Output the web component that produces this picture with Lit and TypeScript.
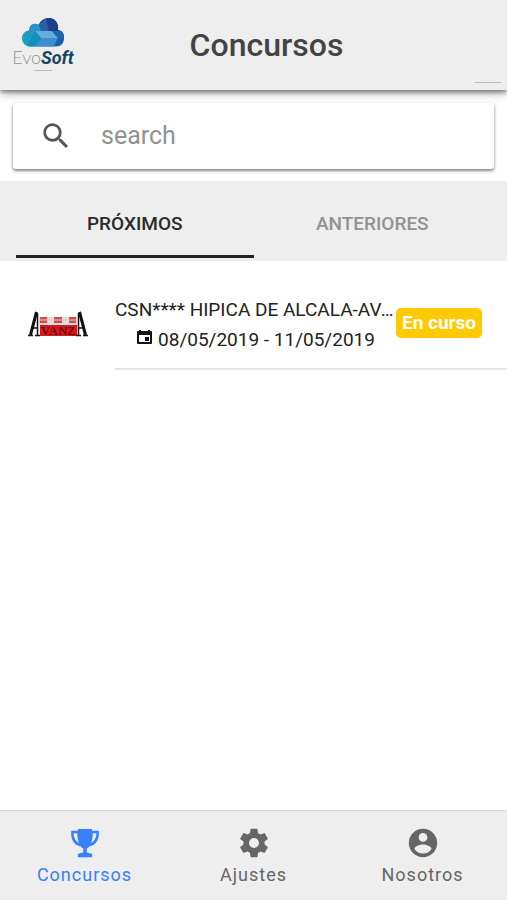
import { LitElement, html, css, svg } from "lit";
import { customElement, state } from "lit/decorators.js";
import { classMap } from "lit/directives/class-map.js";

const icons = {
  trophy: svg`<path fill-rule="evenodd" d="M150 44h212v28h102v44c0 90-42 170-138 190-14 18-28 26-44 32v60c20 6 62 14 82 22v52H148v-52c20-8 62-16 82-22v-60c-16-6-30-14-44-32C90 286 48 206 48 116V72h102zM84 108c2 68 28 118 80 148-18-46-24-90-24-148zm288 0c0 58-6 102-24 148 52-30 78-80 80-148z"/>`,
  gear: svg`<path transform="scale(21.333)" d="M19.43 12.98c.04-.32.07-.64.07-.98s-.03-.66-.07-.98l2.11-1.65c.19-.15.24-.42.12-.64l-2-3.46c-.12-.22-.39-.3-.61-.22l-2.49 1c-.52-.4-1.08-.73-1.69-.98l-.38-2.65C14.46 2.18 14.25 2 14 2h-4c-.25 0-.46.18-.49.42l-.38 2.65c-.61.25-1.17.59-1.69.98l-2.49-1c-.23-.09-.49 0-.61.22l-2 3.46c-.13.22-.07.49.12.64l2.11 1.65c-.04.32-.07.65-.07.98s.03.66.07.98l-2.11 1.65c-.19.15-.24.42-.12.64l2 3.46c.12.22.39.3.61.22l2.49-1c.52.4 1.08.73 1.69.98l.38 2.65c.03.24.24.42.49.42h4c.25 0 .46-.18.49-.42l.38-2.65c.61-.25 1.17-.59 1.69-.98l2.49 1c.23.09.49 0 .61-.22l2-3.46c.12-.22.07-.49-.12-.64l-2.11-1.65zM12 15.500c-1.930 0-3.500-1.570-3.500-3.500s1.570-3.500 3.500-3.500 3.500 1.570 3.500 3.500-1.570 3.500-3.500 3.500z"/>`,
  person: svg`<path transform="scale(21.333)" fill-rule="evenodd" d="M12 2a10 10 0 1 0 0 20 10 10 0 0 0 0-20zm0 3a3.100 3.100 0 1 1 0 6.200A3.100 3.100 0 0 1 12 5zm0 14.400a7.200 7.200 0 0 1-6-3.200c.03-2 4-3.100 6-3.100s5.970 1.100 6 3.100a7.200 7.200 0 0 1-6 3.200z"/>`,
};

@customElement("app-root")
export class AppRoot extends LitElement {
  @state() private segment = "PRÓXIMOS";
  @state() private tab = "Concursos";

  static styles = css`
    :host {
      display: flex;
      flex-direction: column;
      min-height: 100vh;
      background: #fff;
      color: #222;
      font-family: Roboto, sans-serif;
    }
    * { box-sizing: border-box; }
    button {
      border: 0;
      padding: 0;
      background: none;
      font: inherit;
      color: inherit;
      cursor: pointer;
    }
    header {
      display: grid;
      grid-template-columns: 86px 1fr 60px;
      height: 90px;
      background: #eee;
      box-shadow: 0 2px 10px rgba(0, 0, 0, 0.4), 0 2px 4px rgba(0, 0, 0, 0.35);
    }
    .logo {
      display: flex;
      flex-direction: column;
      align-items: center;
      padding-top: 17px;
    }
    .cloud { width: 44px; height: 30px; }
    .brand {
      font: 300 18px/20px Lato, sans-serif;
      color: #8d979c;
      white-space: nowrap;
    }
    .brand b {
      font: italic 700 18px/20px Roboto, sans-serif;
      color: #124865;
    }
    .tagline { width: 18px; height: 1px; margin-top: 2px; background: #bbb; }
    h1 {
      margin: 0;
      font-size: 32px;
      line-height: 90px;
      font-weight: 500;
      text-align: center;
      color: #444;
    }
    .end {
      align-self: end;
      justify-self: end;
      width: 26px;
      height: 1px;
      margin: 0 6px 7px 0;
      background: #bbb;
    }
    .search {
      display: flex;
      align-items: center;
      height: 66px;
      margin: 13px 13px 12px;
      padding-left: 26px;
      gap: 28px;
      background: #fff;
      border-radius: 3px;
      box-shadow: 0 2px 3px rgba(0, 0, 0, 0.4), 0 1px 4px rgba(0, 0, 0, 0.15);
      z-index: 1;
    }
    .search svg { width: 34px; height: 34px; flex: none; fill: #555; }
    input {
      flex: 1;
      min-width: 0;
      height: 60px;
      border: 0;
      padding: 0 0 2px;
      outline: 0;
      background: none;
      font: 25px Roboto, sans-serif;
      color: #333;
    }
    input::placeholder { color: #929292; opacity: 1; }
    .segments {
      display: grid;
      grid-template-columns: 1fr 1fr;
      height: 80px;
      padding: 0 16px 3px;
      background: #eee;
    }
    .segments button {
      padding-top: 10px;
      border-bottom: 3px solid transparent;
      font-size: 19px;
      font-weight: 500;
      color: #929292;
    }
    .segments .on { color: #2a2a2a; border-color: #222; }
    ul { flex: 1; margin: 0; padding: 0; list-style: none; }
    li { display: flex; align-items: center; padding-left: 28px; }
    .avatar { width: 60px; height: 32px; flex: none; margin-top: 20px; }
    .avatar text { font: 400 13px "Liberation Serif", serif; fill: #3c0406; }
    .body {
      flex: 1;
      min-width: 0;
      display: flex;
      align-items: center;
      height: 109px;
      margin-left: 27px;
      padding: 20px 25px 0 0;
      border-bottom: 2px solid #e4e4e4;
    }
    .info {
      flex: 1;
      min-width: 0;
      text-align: center;
      font-size: 19px;
      line-height: 30px;
    }
    .name {
      margin: 0;
      font: inherit;
      text-align: left;
      white-space: nowrap;
      overflow: hidden;
      text-overflow: ellipsis;
    }
    .date { display: flex; justify-content: center; gap: 5px; margin: 0; }
    .date svg { width: 17px; height: 17px; margin-top: 4px; fill: #111; }
    .badge {
      padding: 0 6px;
      border-radius: 5px;
      background: #ffc904;
      color: #fff;
      font-size: 19px;
      font-weight: 700;
      line-height: 30px;
      margin-bottom: 3px;
    }
    nav {
      display: grid;
      grid-template-columns: repeat(3, 1fr);
      height: 90px;
      background: #eee;
      border-top: 1px solid #d8d8d8;
    }
    nav button {
      display: flex;
      flex-direction: column;
      align-items: center;
      padding-top: 15px;
      gap: 3px;
      color: #666;
      font-size: 18px;
      line-height: 24px;
      letter-spacing: 1px;
    }
    nav svg { width: 34px; height: 34px; fill: currentColor; }
    nav .on { color: #3880ff; }
  `;

  render() {
    return html`
      <header>
        <div class="logo">
          <svg class="cloud" viewBox="0 0 44 30" aria-hidden="true">
            <defs>
              <linearGradient id="sky" x1="0" x2="1" y1="0" y2="0">
                <stop offset="0" stop-color="#1aa3c4" />
                <stop offset="0.500" stop-color="#2486c2" />
                <stop offset="1" stop-color="#1a5496" />
              </linearGradient>
              <clipPath id="shape">
                <path d="M9 29.500C4 29.500 1 25.500 1 21c0-4 3-7 7-7.500C8 8 13 5 18 8c1-4 5-7 10-7 6 0 10 5 9 12 4 0 6 3 6 8s-3 8.500-8 8.500z" />
              </clipPath>
            </defs>
            <g clip-path="url(#shape)">
              <path fill="url(#sky)" d="M0 0h44v30H0z" />
              <path fill="#1c3f86" d="M17 0h21v14H17z" />
              <path fill="#2a5ea8" d="M17 8l8-7 3 13H17z" />
              <path fill="#2a93cc" d="M7 14l10-8 3 8-6 7z" />
              <path fill="#62aede" d="M14 14h17l6 7H20z" />
              <path fill="#3f8fd0" d="M20 21h17l-5 9H14z" />
              <path fill="#148fb6" d="M6 30l8-16 6 7-7 9z" />
              <path fill="#2366a8" d="M31 14h13v7h-7z" />
            </g>
          </svg>
          <div class="brand">Evo<b>Soft</b></div>
          <div class="tagline"></div>
        </div>
        <h1>Concursos</h1>
        <div class="end"></div>
      </header>

      <label class="search">
        <svg viewBox="0 0 24 24" aria-hidden="true">
          <path d="M15.500 14h-.79l-.28-.27A6.470 6.470 0 0 0 16 9.500 6.500 6.500 0 1 0 9.500 16c1.610 0 3.090-.59 4.230-1.570l.27.28v.79l5 4.990L20.490 19l-4.990-5zm-6 0C7.010 14 5 11.990 5 9.500S7.010 5 9.500 5 14 7.010 14 9.500 11.990 14 9.500 14z" />
        </svg>
        <input type="search" placeholder="search" aria-label="search" />
      </label>

      <div class="segments">
        ${["PRÓXIMOS", "ANTERIORES"].map(
          (s) => html`<button class=${classMap({ on: s === this.segment })} @click=${() => (this.segment = s)}>${s}</button>`
        )}
      </div>

      <ul>
        <li>
          <svg class="avatar" viewBox="0 0 60 32" role="img" aria-label="Avanza">
            <path fill="#ddd" d="M11 7h38v8H11z" />
            <path fill="#d04a4e" d="M12 7h7v6h-7zm14 0h8v6h-8zm15 0h7v6h-7z" />
            <path fill="#f0c4c4" d="M11 9.500h38v1H11z" />
            <path fill="#dc141b" d="M12 15h37v11H12z" />
            <text x="30" y="25" text-anchor="middle">VANZ</text>
            <path stroke="#111" stroke-width="3" d="M8.500 2L2.500 25M51.500 2l6 23" />
            <path stroke="#111" stroke-width="1.500" d="M9.500 3v22M50.500 3v22M5 18h5M50 18h5" />
            <path stroke="#111" stroke-width="1.500" d="M0 25.500h5M7 25.500h5M48 25.500h5M55 25.500h5" />
          </svg>
          <div class="body">
            <div class="info">
              <h2 class="name">CSN**** HIPICA DE ALCALA-AVANZA</h2>
              <p class="date">
                <svg viewBox="0 0 17 17" aria-hidden="true">
                  <path fill-rule="evenodd" d="M3 1h2v1h7V1h2v1h1q1 0 1 1v11q0 1-1 1H2q-1 0-1-1V3q0-1 1-1h1zM3 6v7h11V6zM9 8h4v4H9z" />
                </svg>
                <span>08/05/2019 - 11/05/2019</span>
              </p>
            </div>
            <span class="badge">En curso</span>
          </div>
        </li>
      </ul>

      <nav>
        ${([["Concursos", icons.trophy], ["Ajustes", icons.gear], ["Nosotros", icons.person]] as const).map(
          ([label, icon]) => html`<button class=${classMap({ on: label === this.tab })} @click=${() => (this.tab = label)}>
            <svg viewBox="0 0 512 512" aria-hidden="true">${icon}</svg>
            <span>${label}</span>
          </button>`
        )}
      </nav>
    `;
  }
}
